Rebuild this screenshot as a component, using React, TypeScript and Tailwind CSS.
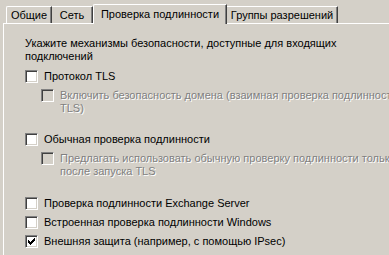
import React from "react";

const font = { fontFamily: '"Liberation Sans", Arial, sans-serif' };

function Box({ checked = false, disabled = false }: { checked?: boolean; disabled?: boolean }) {
  return (
    <div
      className={`w-[13px] h-[13px] shrink-0 border border-t-[#808080] border-l-[#808080] border-b-white border-r-white shadow-[inset_1px_1px_0_#404040,inset_-1px_-1px_0_#d4d0c8] ${
        disabled ? "bg-[#d4d0c8]" : "bg-white"
      }`}
    >
      {checked && (
        <svg width="11" height="11" viewBox="0 0 11 11" shapeRendering="crispEdges">
          <g fill="#000">
            <rect x="2" y="4" width="1" height="3" />
            <rect x="3" y="5" width="1" height="3" />
            <rect x="4" y="6" width="1" height="3" />
            <rect x="5" y="5" width="1" height="3" />
            <rect x="6" y="4" width="1" height="3" />
            <rect x="7" y="3" width="1" height="3" />
            <rect x="8" y="2" width="1" height="3" />
          </g>
        </svg>
      )}
    </div>
  );
}

function Row({
  children,
  checked,
  disabled,
  className = "",
}: {
  children: React.ReactNode;
  checked?: boolean;
  disabled?: boolean;
  className?: string;
}) {
  return (
    <div className={`flex items-start gap-[6px] ${className}`}>
      <Box checked={checked} disabled={disabled} />
      <div
        className={`whitespace-nowrap leading-[13px] ${
          disabled ? "text-[#808080] [text-shadow:1px_1px_0_#fff]" : "text-black"
        }`}
      >
        {children}
      </div>
    </div>
  );
}

export default function App() {
  return (
    <div
      className="w-[389px] h-[255px] bg-[#d4d0c8] overflow-hidden pt-[4px] pl-[3px] text-[11px] text-black"
      style={font}
    >
      <div className="flex items-end h-[19px] pl-[3px] relative z-10">
        <div className="w-[46px] h-[17px] border-l border-t border-white border-r border-r-[#404040] shadow-[inset_-1px_0_0_#808080] rounded-tl-[2px] flex items-center justify-center leading-[13px]">
          Общие
        </div>
        <div className="w-[41px] h-[17px] border-t border-white border-r border-r-[#404040] shadow-[inset_-1px_0_0_#808080] flex items-center justify-center leading-[13px]">
          Сеть
        </div>
        <div className="w-[134px] h-[20px] -mb-[1px] bg-[#d4d0c8] border-l border-t border-white border-r border-r-[#404040] shadow-[inset_-1px_0_0_#808080] rounded-tl-[2px] flex items-start justify-center pt-[3px] leading-[13px]">
          Проверка подлинности
        </div>
        <div className="w-[111px] h-[17px] border-t border-white border-r border-r-[#404040] shadow-[inset_-1px_0_0_#808080] flex items-center justify-center leading-[13px]">
          Группы разрешений
        </div>
      </div>
      <div className="w-[420px] h-[260px] border-t border-l border-white pl-[21px] pt-[13px]">
        <div className="leading-[13px] whitespace-nowrap">
          <div>Укажите механизмы безопасности, доступные для входящих</div>
          <div>подключений</div>
        </div>
        <div className="flex flex-col">
          <Row className="mt-[7px]">Протокол TLS</Row>
          <Row className="mt-[6px] ml-[16px]" disabled>
            <div>Включить безопасность домена (взаимная проверка подлинности</div>
            <div>TLS)</div>
          </Row>
          <Row className="mt-[18px]">Обычная проверка подлинности</Row>
          <Row className="mt-[6px] ml-[16px]" disabled>
            <div>Предлагать использовать обычную проверку подлинности только</div>
            <div>после запуска TLS</div>
          </Row>
          <Row className="mt-[19px]">Проверка подлинности Exchange Server</Row>
          <Row className="mt-[6px]">Встроенная проверка подлинности Windows</Row>
          <Row className="mt-[6px]" checked>
            Внешняя защита (например, с помощью IPsec)
          </Row>
        </div>
      </div>
    </div>
  );
}
